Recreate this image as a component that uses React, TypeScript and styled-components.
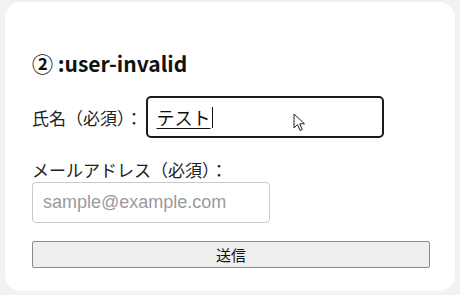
import styled, { createGlobalStyle } from 'styled-components';

const GlobalStyle = createGlobalStyle`
  html, body {
    margin: 0;
    padding: 0;
    background: #f2f2f2;
  }
  body {
    font-family: 'Noto Sans CJK JP', 'Noto Sans', sans-serif;
    color: #222;
  }
`;

const Card = styled.div`
  box-sizing: border-box;
  margin: 2px 5px 0 5px;
  width: 450px;
  height: 289px;
  background: #fff;
  border-radius: 16px;
  padding: 47px 26px 0 27px;
  display: flex;
  flex-direction: column;
`;

const Heading = styled.h2`
  margin: 0;
  font-size: 21px;
  font-weight: 700;
  line-height: 28px;
  color: #111;
`;

const InlineRow = styled.div`
  display: flex;
  align-items: center;
  gap: 3px;
  margin-top: 19px;
`;

const Label = styled.label`
  font-size: 17px;
  line-height: 25px;
  color: #222;
`;

const FocusedField = styled.div`
  position: relative;
  box-sizing: border-box;
  width: 238px;
  height: 42px;
  border: 2px solid #1b1b1b;
  border-radius: 5px;
  padding: 0 9px;
  display: flex;
  align-items: center;
`;

const Composing = styled.span`
  font-size: 18px;
  line-height: 22px;
  text-decoration: underline;
  text-underline-offset: 3px;
  text-decoration-thickness: 1px;
  color: #111;
`;

const Caret = styled.span`
  display: inline-block;
  width: 1px;
  height: 21px;
  background: #111;
  margin-left: 1px;
`;

const Pointer = styled.svg`
  position: absolute;
  left: 145px;
  top: 15px;
`;

const StackRow = styled.div`
  display: flex;
  flex-direction: column;
  align-items: flex-start;
  margin-top: 19px;
`;

const TextInput = styled.input`
  box-sizing: border-box;
  width: 238px;
  height: 41px;
  margin: 0;
  border: 1px solid #c8c8c8;
  border-radius: 4px;
  padding: 0 10px;
  font-family: 'Liberation Sans', Arial, sans-serif;
  font-size: 18px;
  outline: none;
  &::placeholder {
    color: #9a9a9a;
  }
`;

const SubmitButton = styled.button`
  box-sizing: border-box;
  margin-top: 18px;
  width: 398px;
  height: 27px;
  background: #efefef;
  border: 1px solid #8a8a8a;
  border-radius: 2px;
  font-family: 'Noto Sans CJK JP', sans-serif;
  font-size: 15px;
  color: #111;
  padding: 0;
`;

const App = () => (
  <>
    <GlobalStyle />
    <Card>
      <Heading>② :user-invalid</Heading>
      <InlineRow>
        <Label>氏名（必須）：</Label>
        <FocusedField>
          <Composing>テスト</Composing>
          <Caret />
          <Pointer width="14" height="20" viewBox="0 0 14 20">
            <path
              d="M1 1 L1 15 L4.5 11.5 L7 17.5 L9.2 16.6 L6.8 10.8 L11.5 10.8 Z"
              fill="#fff"
              stroke="#222"
              strokeWidth="1"
              strokeLinejoin="round"
            />
          </Pointer>
        </FocusedField>
      </InlineRow>
      <StackRow>
        <Label>メールアドレス（必須）：</Label>
        <TextInput type="email" placeholder="sample@example.com" />
      </StackRow>
      <SubmitButton type="submit">送信</SubmitButton>
    </Card>
  </>
);

export default App;
